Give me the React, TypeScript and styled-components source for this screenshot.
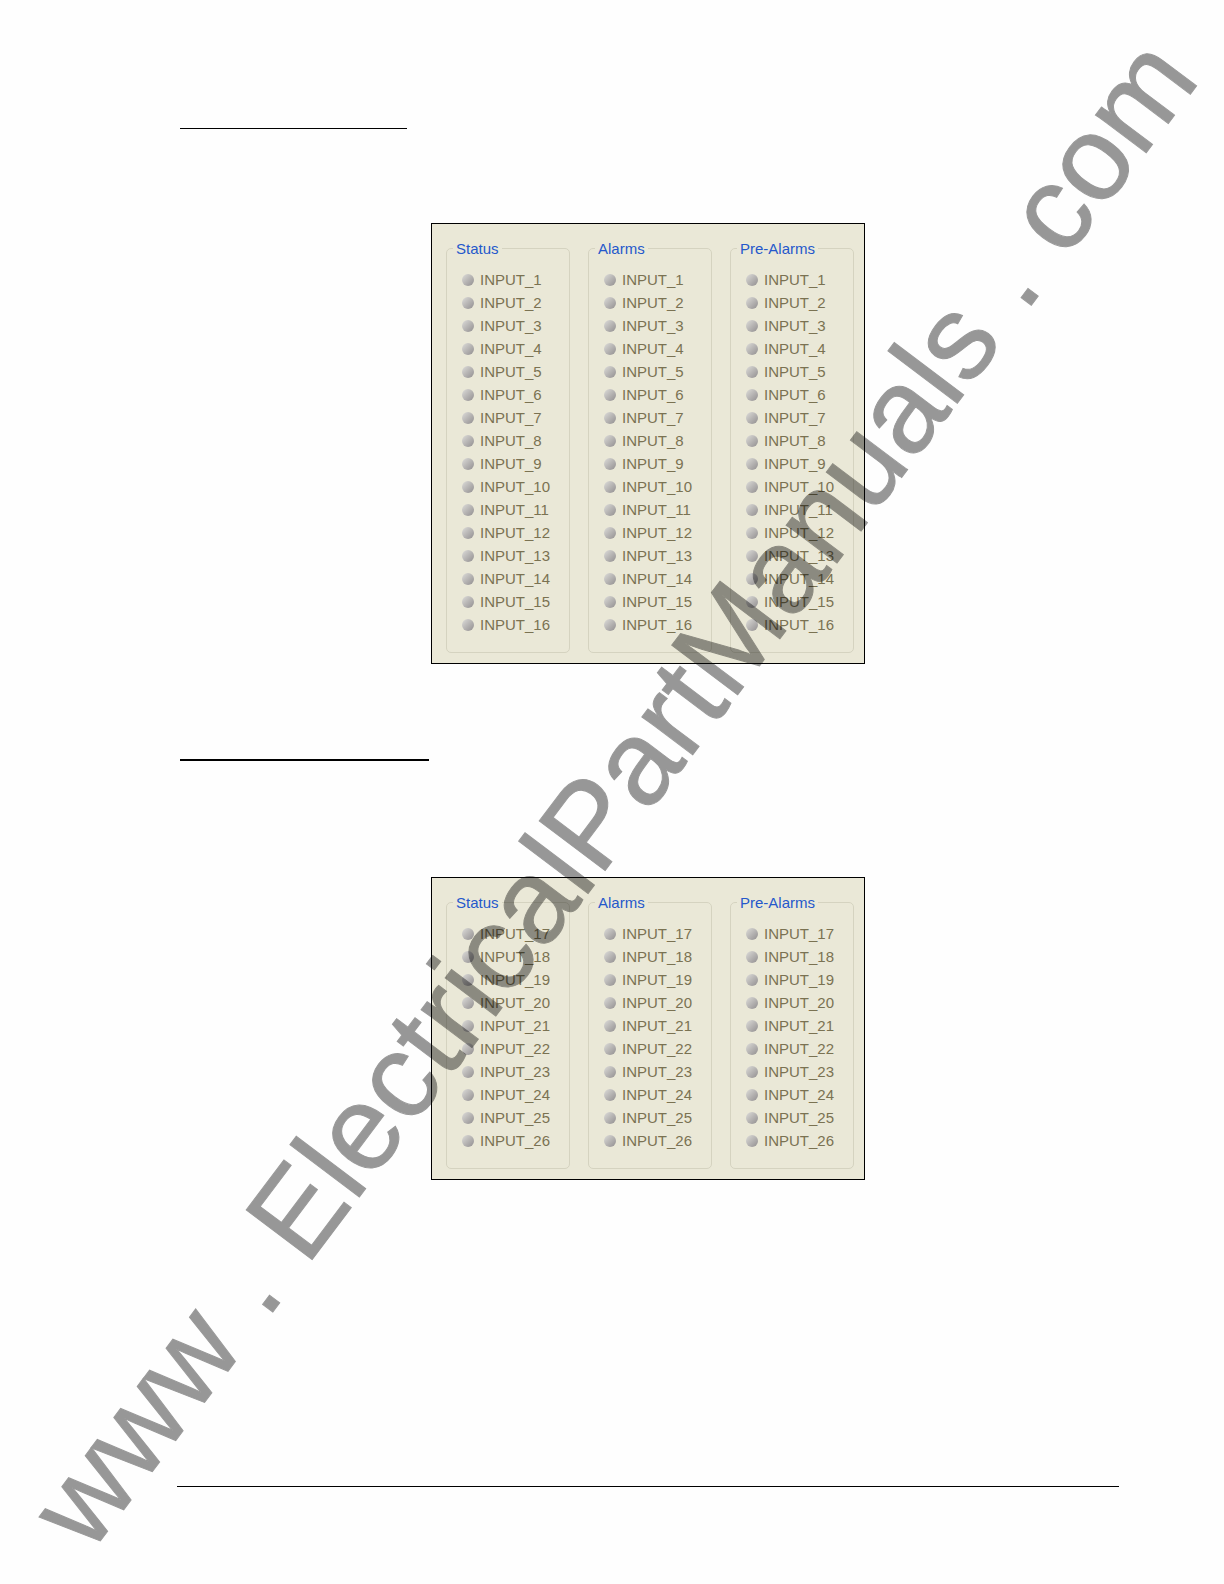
import React from "react";
import styled, { createGlobalStyle } from "styled-components";

const GlobalStyle = createGlobalStyle`
  *, *::before, *::after { box-sizing: border-box; }
  body {
    margin: 0;
    background: #fefefe;
    font-family: "Liberation Sans", Arial, sans-serif;
  }
`;

const Page = styled.div`
  position: relative;
  display: flex;
  flex-direction: column;
  min-height: 100vh;
  padding: 128px 105px 97px 177px;
`;

const Section = styled.section`
  display: flex;
  flex-direction: column;
  margin-bottom: 95px;
`;

const HeadingRule = styled.hr<{ $length: number; $weight: number; $gap: number }>`
  width: ${(p) => p.$length}px;
  height: ${(p) => p.$weight}px;
  margin: 0 0 ${(p) => p.$gap}px 3px;
  border: 0;
  background: #000;
`;

const Panel = styled.div`
  display: grid;
  grid-template-columns: repeat(3, 1fr);
  gap: 18px;
  width: 100%;
  max-width: 434px;
  align-self: center;
  padding: 13px 10px 10px 14px;
  border: 1px solid #000;
  background: #eae8d7;
`;

const Group = styled.fieldset`
  min-width: 0;
  margin: 0;
  padding: 9px 0 16px;
  border: 1px solid #d5d3c0;
  border-radius: 5px;
`;

const GroupTitle = styled.legend`
  margin-left: 6px;
  padding: 2px 3px 0;
  color: #2558cb;
  font-size: 15px;
  line-height: 20px;
`;

const InputList = styled.ul`
  margin: 0;
  padding: 0 0 0 15px;
  list-style: none;
`;

const InputRow = styled.li`
  display: flex;
  align-items: center;
  gap: 6px;
  color: #7a7252;
  font-size: 15px;
  line-height: 23px;
  white-space: nowrap;
`;

const Led = styled.span`
  flex: none;
  width: 12px;
  height: 12px;
  border-radius: 50%;
  background: linear-gradient(135deg, #d6d5d2 10%, #b7b5b4 50%, #959293 95%);
`;

const FooterRule = styled.hr`
  width: 100%;
  height: 1px;
  margin: auto 0 0;
  border: 0;
  background: #000;
`;

const Watermark = styled.div`
  position: absolute;
  top: 50%;
  left: 50%;
  transform: translate(-50%, -50%) rotate(-53deg);
  color: #000;
  opacity: 0.4;
  -webkit-text-stroke: 1px #000;
  font-size: 120px;
  line-height: 1;
  white-space: nowrap;
  pointer-events: none;
`;

const GROUPS = ["Status", "Alarms", "Pre-Alarms"];

function InputPanel({ first, last }: { first: number; last: number }) {
  const inputs = Array.from({ length: last - first + 1 }, (_, i) => first + i);
  return (
    <Panel>
      {GROUPS.map((title) => (
        <Group key={title}>
          <GroupTitle>{title}</GroupTitle>
          <InputList>
            {inputs.map((n) => (
              <InputRow key={n}>
                <Led />
                {`INPUT_${n}`}
              </InputRow>
            ))}
          </InputList>
        </Group>
      ))}
    </Panel>
  );
}

export default function App() {
  return (
    <>
      <GlobalStyle />
      <Page>
        <Section>
          <HeadingRule $length={227} $weight={1} $gap={94} />
          <InputPanel first={1} last={16} />
        </Section>
        <Section>
          <HeadingRule $length={249} $weight={2} $gap={116} />
          <InputPanel first={17} last={26} />
        </Section>
        <FooterRule />
        <Watermark>www . ElectricalPartManuals . com</Watermark>
      </Page>
    </>
  );
}
